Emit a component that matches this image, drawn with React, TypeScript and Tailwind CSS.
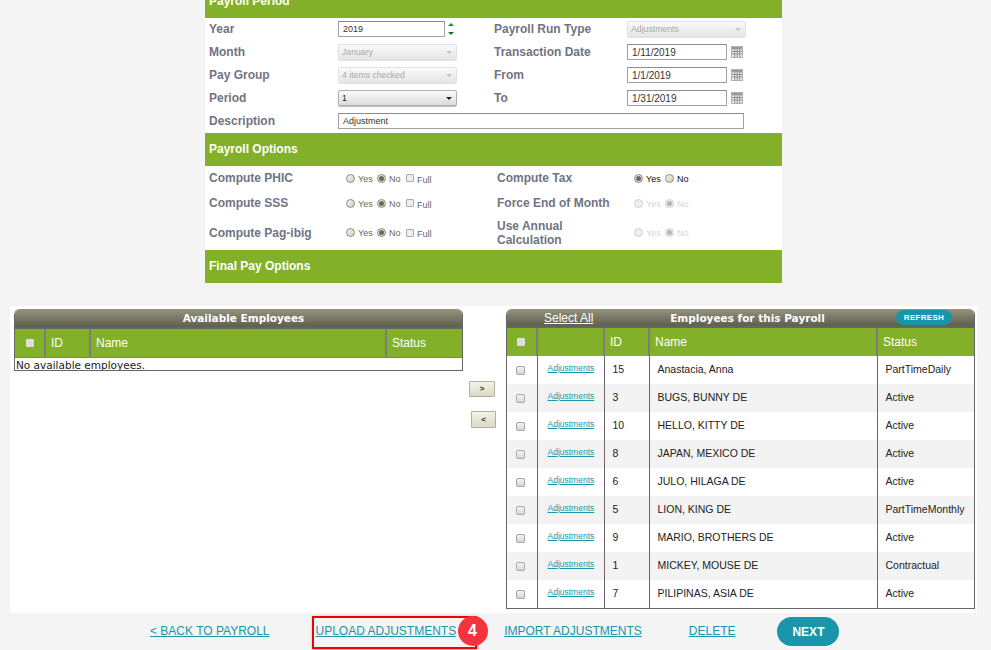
const arial = "font-['Liberation_Sans',Arial,sans-serif]";

const employees = [
  ["15", "Anastacia, Anna", "PartTimeDaily"],
  ["3", "BUGS, BUNNY DE", "Active"],
  ["10", "HELLO, KITTY DE", "Active"],
  ["8", "JAPAN, MEXICO DE", "Active"],
  ["6", "JULO, HILAGA DE", "Active"],
  ["5", "LION, KING DE", "PartTimeMonthly"],
  ["9", "MARIO, BROTHERS DE", "Active"],
  ["1", "MICKEY, MOUSE DE", "Contractual"],
  ["7", "PILIPINAS, ASIA DE", "Active"],
];

function SectionHeader({ title }: { title: string }) {
  return (
    <div className="flex h-[33px] items-start bg-[#82b029] px-1 pt-[7px] text-[12px] leading-[18px] font-bold text-white">
      {title}
    </div>
  );
}

function Label({ children, className = "" }: { children: React.ReactNode; className?: string }) {
  return <div className={`text-[12px] leading-[14px] font-bold text-[#70747f] ${className}`}>{children}</div>;
}

function TextBox({ value, width, size = "pt-[2px] text-[9px]" }: { value: string; width: string; size?: string }) {
  return (
    <div className={`flex h-4 items-center border border-[#a0a0a0] border-t-[#8c8c8c] bg-white pr-[3px] pl-1 text-[#333] ${size} ${width}`}>
      {value}
    </div>
  );
}

function Select({ value, disabled = false, width = "w-[119px]" }: { value: string; disabled?: boolean; width?: string }) {
  return (
    <div
      className={`flex h-4 items-center justify-between rounded-[2px] border px-[3px] text-[8.7px] ${width} ${
        disabled
          ? "border-[#e2e2e2] bg-gradient-to-b from-[#fafafa] to-[#e6e6e6] text-[#a8a8a8] shadow-[0_1px_0_#e4e4e4]"
          : "border-[#b0b0b0] bg-gradient-to-b from-[#fafafa] to-[#dcdcdc] text-[#222] shadow-[0_1px_1px_#bbb]"
      }`}
    >
      <span className="mt-[2px]">{value}</span>
      <span className={`mr-[1px] h-0 w-0 border-x-[3px] border-t-[3px] border-x-transparent ${disabled ? "border-t-[#c4c4c4]" : "border-t-[#222]"}`} />
    </div>
  );
}

function CalendarIcon() {
  return (
    <svg width="12" height="12" viewBox="0 0 12 12" className="ml-1 shrink-0">
      <rect x="0.5" y="0.5" width="11" height="11" fill="#eeeeee" stroke="#b0b0b0" />
      <rect x="1" y="1" width="10" height="2.5" fill="#9a9a9a" />
      <path d="M1 5.5h10M1 8h10M3.7 3.5V11M6.2 3.5V11M8.7 3.5V11" stroke="#8f8f8f" strokeWidth="1" fill="none" />
    </svg>
  );
}

function DateField({ value }: { value: string }) {
  return (
    <div className="flex items-center">
      <TextBox value={value} width="w-[100px]" size="text-[10px]" />
      <CalendarIcon />
    </div>
  );
}

function Radio({ checked = false, disabled = false }: { checked?: boolean; disabled?: boolean }) {
  return (
    <span
      className={`flex h-[9px] w-[9px] items-center justify-center rounded-full border ${
        disabled ? "border-[#d0d0d0] bg-[#f1f1ea]" : "border-[#8b8b80] bg-gradient-to-br from-[#f4f4ea] to-[#cfcfbf]"
      }`}
    >
      {checked && <span className={`h-[5px] w-[5px] rounded-full ${disabled ? "bg-[#b5b5b5]" : "bg-[#6a6a5e]"}`} />}
    </span>
  );
}

function Choice({ label, checked, disabled, dim }: { label: string; checked?: boolean; disabled?: boolean; dim?: boolean }) {
  return (
    <span className={`flex items-center gap-[3px] text-[9px] leading-[10px] ${disabled ? "text-[#d6d6de]" : dim ? "text-[#666]" : "text-[#111]"}`}>
      <Radio checked={checked} disabled={disabled} />
      <span className="mt-[1px]">{label}</span>
    </span>
  );
}

function CheckBox({ header = false }: { header?: boolean }) {
  return (
    <span
      className={`block ${
        header
          ? "h-[8px] w-[8px] rounded-[1px] bg-[#dedede]"
          : "h-[9px] w-[9px] rounded-[2px] border border-[#a8a8a8] bg-gradient-to-b from-[#f2f2f2] to-[#d8d8d8]"
      }`}
    />
  );
}

function YesNoFull() {
  return (
    <div className="flex items-center">
      <div className="flex w-[31px]"><Choice label="Yes" dim /></div>
      <div className="flex w-[29px]"><Choice label="No" checked dim /></div>
      <span className="flex items-center gap-[3px] text-[9px] leading-[10px] text-[#666]">
        <span className="block h-2 w-2 rounded-[1px] border border-[#aaa] bg-[#eee]" />
        <span className="mt-[3px]">Full</span>
      </span>
    </div>
  );
}

function YesNo({ yes, disabled }: { yes?: boolean; disabled?: boolean }) {
  return (
    <div className="flex items-center">
      <div className="flex w-[31px]"><Choice label="Yes" checked={yes} disabled={disabled} /></div>
      <Choice label="No" checked={!yes} disabled={disabled} />
    </div>
  );
}

function PayrollForm() {
  return (
    <div className="ml-[205px] w-[577px] bg-white">
      <div className="h-[18px] overflow-hidden bg-[#82b029] px-1 text-[12px] leading-[2px] font-bold text-white">Payroll Period</div>
      <div className="grid grid-cols-[129px_156px_133px_1fr] items-center gap-y-[7px] pt-[3px] pr-[38px] pb-1 pl-1">
        <Label>Year</Label>
        <div className="flex items-center">
          <TextBox value="2019" width="w-[107px]" />
          <div className="ml-[3px] flex flex-col gap-[6px]">
            <span className="h-0 w-0 border-x-[3px] border-b-[3px] border-x-transparent border-b-[#1f8a2a]" />
            <span className="h-0 w-0 border-x-[3px] border-t-[3px] border-x-transparent border-t-[#1f6a1f]" />
          </div>
        </div>
        <Label>Payroll Run Type</Label>
        <Select value="Adjustments" disabled />

        <Label>Month</Label>
        <Select value="January" disabled />
        <Label>Transaction Date</Label>
        <DateField value="1/11/2019" />

        <Label>Pay Group</Label>
        <Select value="4 items checked" disabled />
        <Label>From</Label>
        <DateField value="1/1/2019" />

        <Label>Period</Label>
        <Select value="1" />
        <Label>To</Label>
        <DateField value="1/31/2019" />

        <Label>Description</Label>
        <div className="col-span-3">
          <TextBox value="Adjustment" width="w-[406px]" />
        </div>
      </div>

      <SectionHeader title="Payroll Options" />
      <div className="grid grid-cols-[137px_151px_137px_1fr] items-center pb-px pl-1">
        <div className="col-span-4 grid h-[24px] grid-cols-subgrid items-center">
          <Label>Compute PHIC</Label>
          <YesNoFull />
          <Label>Compute Tax</Label>
          <YesNo yes />
        </div>
        <div className="col-span-4 grid h-[26px] grid-cols-subgrid items-center">
          <Label>Compute SSS</Label>
          <YesNoFull />
          <Label>Force End of Month</Label>
          <YesNo disabled />
        </div>
        <div className="col-span-4 grid h-[33px] grid-cols-subgrid items-center">
          <Label>Compute Pag-ibig</Label>
          <YesNoFull />
          <Label>Use Annual<br />Calculation</Label>
          <YesNo disabled />
        </div>
      </div>
      <SectionHeader title="Final Pay Options" />
    </div>
  );
}

const titleBar = "bg-gradient-to-b from-[#94947f] to-[#5f5f4e] font-['DejaVu_Sans',Verdana,sans-serif] text-[10.5px] font-bold text-white";
const headCell = "border-r-2 border-[#7d7d7d] bg-[#82b029] pl-[5px] text-left text-[12px] font-normal text-white last:border-r-0";

function AvailableTable() {
  return (
    <div className="h-[62px] w-[449px] overflow-hidden rounded-t-[6px] border border-t-0 border-[#666] bg-white">
      <div className={`h-[20px] border-b-2 border-[#666] pt-[2px] pl-[10px] text-center leading-[15px] ${titleBar}`}>Available Employees</div>
      <table className="w-full table-fixed border-collapse">
        <colgroup>
          <col className="w-[30px]" />
          <col className="w-[45px]" />
          <col className="w-[296px]" />
          <col />
        </colgroup>
        <thead>
          <tr className="h-[28px] border-b border-[#7d7d7d]">
            <th className={headCell}><span className="ml-[6px] block"><CheckBox header /></span></th>
            <th className={headCell}>ID</th>
            <th className={headCell}>Name</th>
            <th className={headCell}>Status</th>
          </tr>
        </thead>
        <tbody>
          <tr>
            <td colSpan={4} className="h-[13px] pt-px pl-[1px] font-['DejaVu_Sans',Verdana,sans-serif] text-[10.5px] leading-[12px] text-[#222]">
              No available employees.
            </td>
          </tr>
        </tbody>
      </table>
    </div>
  );
}

function MoveButton({ label, className }: { label: string; className: string }) {
  return (
    <div className={`flex items-center justify-center rounded-[1px] border border-[#b0b0a0] bg-gradient-to-b from-[#f4f4e6] to-[#d9d9c6] text-[8px] leading-none font-bold text-[#333] ${className}`}>
      {label}
    </div>
  );
}

function PayrollTable() {
  return (
    <div className="h-[300px] w-[469px] overflow-hidden rounded-t-[6px] border border-t-0 border-[#666] bg-white">
      <div className={`relative flex h-[19px] items-center justify-center border-b-2 border-[#666] pt-[3px] pl-[14px] ${titleBar}`}>
        <span className={`absolute top-0 left-[37px] text-[12px] font-normal underline ${arial}`}>Select All</span>
        <span>Employees for this Payroll</span>
        <span className={`absolute top-[1px] right-[22px] flex h-[15px] w-[56px] items-center justify-center rounded-full bg-[#1a95a9] text-[8px] tracking-[0.3px] ${arial}`}>REFRESH</span>
      </div>
      <table className="w-full table-fixed border-collapse">
        <colgroup>
          <col className="w-[30px]" />
          <col className="w-[67px]" />
          <col className="w-[45px]" />
          <col className="w-[228px]" />
          <col />
        </colgroup>
        <thead>
          <tr className="h-[28px]">
            <th className={headCell}><span className="ml-[5px] block"><CheckBox header /></span></th>
            <th className={headCell}></th>
            <th className={headCell}>ID</th>
            <th className={headCell}>Name</th>
            <th className={headCell}>Status</th>
          </tr>
        </thead>
        <tbody>
          {employees.map(([id, name, status], i) => (
            <tr key={id} className={`h-[28px] text-[10.5px] text-[#222] ${i % 2 === 1 ? "bg-[#f3f3f3]" : "bg-white"}`}>
              <td className="border-r border-[#666] pl-[9px]"><CheckBox /></td>
              <td className="border-r border-[#666] pb-[3px] pl-[10px] text-[8.5px] text-[#1a95a9] underline">Adjustments</td>
              <td className="border-r border-[#666] pb-px pl-2">{id}</td>
              <td className="border-r border-[#666] pb-px pl-2">{name}</td>
              <td className="pb-px pl-2">{status}</td>
            </tr>
          ))}
        </tbody>
      </table>
    </div>
  );
}

function FooterLink({ children }: { children: React.ReactNode }) {
  return <span className="mb-[2px] text-[12px] leading-[14px] text-[#1a95a9] underline">{children}</span>;
}

export default function App() {
  return (
    <div className={`h-[650px] w-[991px] overflow-hidden bg-[#f4f4f4] ${arial}`}>
      <PayrollForm />

      <div className="mt-[23px] ml-[10px] flex h-[307px] w-[967px] items-start bg-white pt-[3px] pl-1">
        <AvailableTable />
        <div className="w-[43px] shrink-0 pt-[72px]">
          <MoveButton label=">" className="ml-[6px] h-4 w-[26px]" />
          <MoveButton label="<" className="mt-[14px] ml-2 h-[17px] w-[25px]" />
        </div>
        <PayrollTable />
      </div>

      <div className="flex h-[37px] items-center gap-[47px] pl-[150px]">
        <FooterLink>&lt; BACK TO PAYROLL</FooterLink>
        <div className="relative mr-px ml-[-1px] flex">
          <FooterLink>UPLOAD ADJUSTMENTS</FooterLink>
          <div className="absolute top-[-8px] left-[-4px] h-[33px] w-[165px] border-2 border-[#f00000] shadow-[1px_1px_3px_#999]" />
          <div className="absolute top-[-8px] left-[142px] flex h-[30px] w-[30px] items-center justify-center rounded-full bg-[#f5333f] text-[16px] font-bold text-white">4</div>
        </div>
        <FooterLink>IMPORT ADJUSTMENTS</FooterLink>
        <FooterLink>DELETE</FooterLink>
        <div className="ml-[-5px] flex h-[29px] w-[62px] items-center justify-center rounded-full bg-[#1a95a9] text-[12px] font-bold text-white">NEXT</div>
      </div>
    </div>
  );
}
